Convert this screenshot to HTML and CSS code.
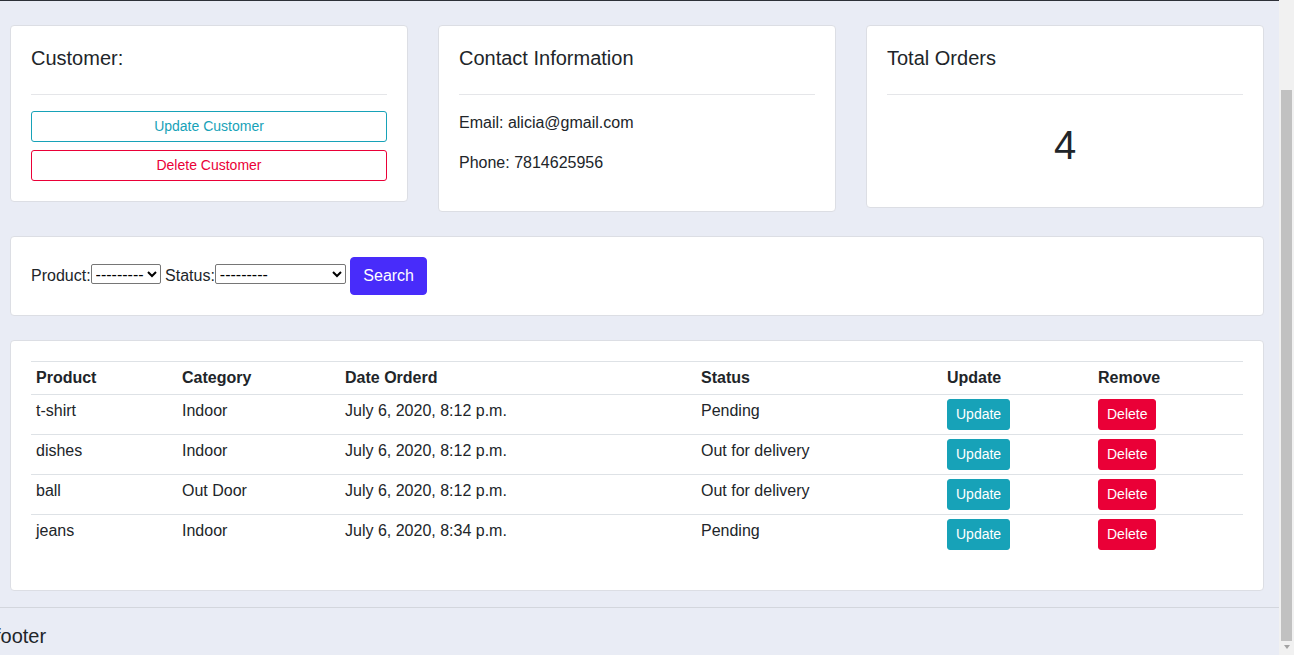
FILE: index.html
```html
<!DOCTYPE html>
<html lang="en">
<head>
<meta charset="utf-8">
<title>Customer</title>
<link rel="stylesheet" href="styles.css">
</head>
<body>
<div class="screen">
  <div class="viewport">
    <div class="navbar-edge"></div>
    <main class="page">
      <section class="top-row">
        <div class="card">
          <div class="card-body">
            <h5 class="card-title">Customer:</h5>
            <hr class="rule">
            <a class="btn btn-sm btn-block btn-outline-info">Update Customer</a>
            <a class="btn btn-sm btn-block btn-outline-danger">Delete Customer</a>
          </div>
        </div>
        <div class="card">
          <div class="card-body">
            <h5 class="card-title">Contact Information</h5>
            <hr class="rule">
            <p class="info">Email: alicia@gmail.com</p>
            <p class="info">Phone: 7814625956</p>
          </div>
        </div>
        <div class="card">
          <div class="card-body">
            <h5 class="card-title">Total Orders</h5>
            <hr class="rule">
            <h1 class="total">4</h1>
          </div>
        </div>
      </section>

      <section class="card wide">
        <div class="card-body">
          <form class="filter">
            <label>Product:</label><select class="sel sel-product"><option>---------</option></select> <label>Status:</label><select class="sel sel-status"><option>---------</option></select> <button type="button" class="btn btn-search">Search</button>
          </form>
        </div>
      </section>

      <section class="card wide">
        <div class="card-body">
          <table class="table">
            <colgroup>
              <col class="c-product"><col class="c-category"><col class="c-date"><col class="c-status"><col class="c-update"><col class="c-remove">
            </colgroup>
            <tr><th>Product</th><th>Category</th><th>Date Orderd</th><th>Status</th><th>Update</th><th>Remove</th></tr>
            <tr><td>t-shirt</td><td>Indoor</td><td>July 6, 2020, 8:12 p.m.</td><td>Pending</td><td><a class="btn btn-sm btn-info">Update</a></td><td><a class="btn btn-sm btn-danger">Delete</a></td></tr>
            <tr><td>dishes</td><td>Indoor</td><td>July 6, 2020, 8:12 p.m.</td><td>Out for delivery</td><td><a class="btn btn-sm btn-info">Update</a></td><td><a class="btn btn-sm btn-danger">Delete</a></td></tr>
            <tr><td>ball</td><td>Out Door</td><td>July 6, 2020, 8:12 p.m.</td><td>Out for delivery</td><td><a class="btn btn-sm btn-info">Update</a></td><td><a class="btn btn-sm btn-danger">Delete</a></td></tr>
            <tr><td>jeans</td><td>Indoor</td><td>July 6, 2020, 8:34 p.m.</td><td>Pending</td><td><a class="btn btn-sm btn-info">Update</a></td><td><a class="btn btn-sm btn-danger">Delete</a></td></tr>
          </table>
        </div>
      </section>
    </main>
    <footer class="footer">
      <h4 class="footer-title">footer</h4>
    </footer>
  </div>
  <div class="scrollbar">
    <div class="scroll-thumb"></div>
    <div class="scroll-arrow"></div>
  </div>
</div>
</body>
</html>
```

FILE: styles.css
```css
* { box-sizing: border-box; }

html, body { height: 100%; }

body {
  margin: 0;
  overflow: hidden;
  background: #e9ecf5;
  font-family: "Liberation Sans", Arial, sans-serif;
  font-size: 16px;
  line-height: 1.5;
  color: #212529;
}

.screen {
  display: flex;
  height: 655px;
}

.viewport {
  flex: 1;
  min-width: 0;
  overflow: hidden;
}

.navbar-edge {
  height: 1px;
  background: #2d3038;
}

.page {
  display: flex;
  flex-direction: column;
  gap: 24px;
  padding-top: 24px;
}

.top-row {
  display: grid;
  grid-template-columns: 398px 398px 398px;
  column-gap: 30px;
  padding-left: 10px;
  align-items: start;
}

.card {
  background: #fff;
  border: 1px solid #dcdee4;
  border-radius: 4px;
}

.card.wide {
  margin: 0 15px 0 10px;
}

.card-body {
  padding: 20px;
}

.card-title {
  margin: 0;
  font-size: 20px;
  font-weight: 500;
  line-height: 1.2;
}

.rule {
  margin: 24px 0 16px;
  border: 0;
  border-top: 1px solid #e5e6e9;
}

.info {
  margin: 0 0 16px;
}

.total {
  margin: 0 0 8px;
  padding: 10px 0;
  font-size: 40px;
  font-weight: 500;
  line-height: 1.2;
  text-align: center;
}

.btn {
  display: inline-block;
  border: 1px solid transparent;
  border-radius: 4px;
  text-align: center;
  white-space: nowrap;
  cursor: pointer;
  font-family: inherit;
  text-decoration: none;
}

.btn-sm {
  padding: 4px 8px;
  font-size: 14px;
  line-height: 1.5;
  border-radius: 3px;
}

.btn-block {
  display: block;
  width: 100%;
}

.btn-block + .btn-block {
  margin-top: 8px;
}

.btn-outline-info {
  color: #17a2b8;
  border-color: #17a2b8;
}

.btn-outline-danger {
  color: #ea0037;
  border-color: #ea0037;
}

.btn-info {
  color: #fff;
  background: #17a2b8;
  border-color: #17a2b8;
}

.btn-danger {
  color: #fff;
  background: #ea0037;
  border-color: #ea0037;
}

.btn-search {
  padding: 6px 12px;
  font-size: 16px;
  line-height: 1.5;
  color: #fff;
  background: #482cfa;
  border-color: #482cfa;
}

.filter {
  margin: 0;
}

.sel {
  height: 20px;
  padding: 0;
  font-family: "Liberation Sans", Arial, sans-serif;
  font-size: 16px;
  color: #000;
  background: #fff;
  border: 1px solid #767676;
  border-radius: 2px;
  vertical-align: 1px;
}

.sel-product { width: 70px; }
.sel-status { width: 131px; }

.table {
  width: 100%;
  margin-bottom: 16px;
  border-collapse: collapse;
  table-layout: fixed;
}

.c-product { width: 146px; }
.c-category { width: 163px; }
.c-date { width: 356px; }
.c-status { width: 246px; }
.c-update { width: 151px; }
.c-remove { width: 150px; }

.table th,
.table td {
  padding: 4px 5px;
  border-top: 1px solid #dee2e6;
  vertical-align: top;
  text-align: left;
}

.table th {
  font-weight: 700;
}

.footer {
  margin-top: 16px;
  border-top: 1px solid #d3d6dd;
  padding-top: 16px;
}

.footer-title {
  margin: 0 0 0 -5px;
  font-size: 20px;
  font-weight: 500;
  line-height: 1.2;
}

.scrollbar {
  width: 15px;
  flex: none;
  display: flex;
  flex-direction: column;
  align-items: center;
  background: #f1f1f1;
}

.scroll-thumb {
  width: 11px;
  height: 551px;
  margin-top: 90px;
  background: #c1c1c1;
}

.scroll-arrow {
  margin-top: 4px;
  width: 0;
  height: 0;
  border-left: 3.5px solid transparent;
  border-right: 3.5px solid transparent;
  border-top: 4px solid #a3a3a3;
}
```
